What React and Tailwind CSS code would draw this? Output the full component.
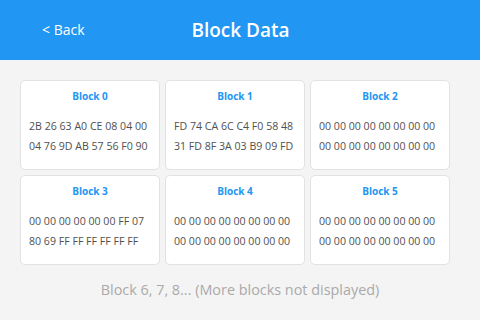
import React from "react";

const blocks = [
  ["2B 26 63 A0 CE 08 04 00", "04 76 9D AB 57 56 F0 90"],
  ["FD 74 CA 6C C4 F0 58 48", "31 FD 8F 3A 03 B9 09 FD"],
  ["00 00 00 00 00 00 00 00", "00 00 00 00 00 00 00 00"],
  ["00 00 00 00 00 00 FF 07", "80 69 FF FF FF FF FF FF"],
  ["00 00 00 00 00 00 00 00", "00 00 00 00 00 00 00 00"],
  ["00 00 00 00 00 00 00 00", "00 00 00 00 00 00 00 00"],
];

export default function App() {
  return (
    <div
      className="w-[480px] h-[320px] bg-[#f4f4f4] flex flex-col overflow-hidden"
      style={{ fontFamily: '"Open Sans", "Noto Sans", sans-serif' }}
    >
      <div className="h-[60px] bg-[#2196f3] relative flex items-center justify-center shrink-0">
        <span className="absolute left-[42px] top-[20px] text-white text-[14px] leading-[20px]">
          &lt; Back
        </span>
        <span className="text-white text-[19px] font-semibold leading-[24px] pl-[1px]">Block Data</span>
      </div>
      <div className="ml-[20px] w-[430px] pt-[20px] grid grid-cols-3 gap-[5px]">
        {blocks.map((lines, i) => (
          <div
            key={i}
            className="h-[90px] bg-white border border-[#e2e2e2] rounded-[5px] flex flex-col pt-[8px] px-[8px]"
          >
            <div className="text-center text-[#2196f3] text-[10px] font-bold leading-[14px]">Block {i}</div>
            <div className="mt-[13px] text-[#505050] text-[10.6px] leading-[20px] whitespace-nowrap">
              <div>{lines[0]}</div>
              <div>{lines[1]}</div>
            </div>
          </div>
        ))}
      </div>
      <div className="mt-[15px] text-center text-[#aaaaaa] text-[14.4px] leading-[20px]">
        Block 6, 7, 8... (More blocks not displayed)
      </div>
    </div>
  );
}
